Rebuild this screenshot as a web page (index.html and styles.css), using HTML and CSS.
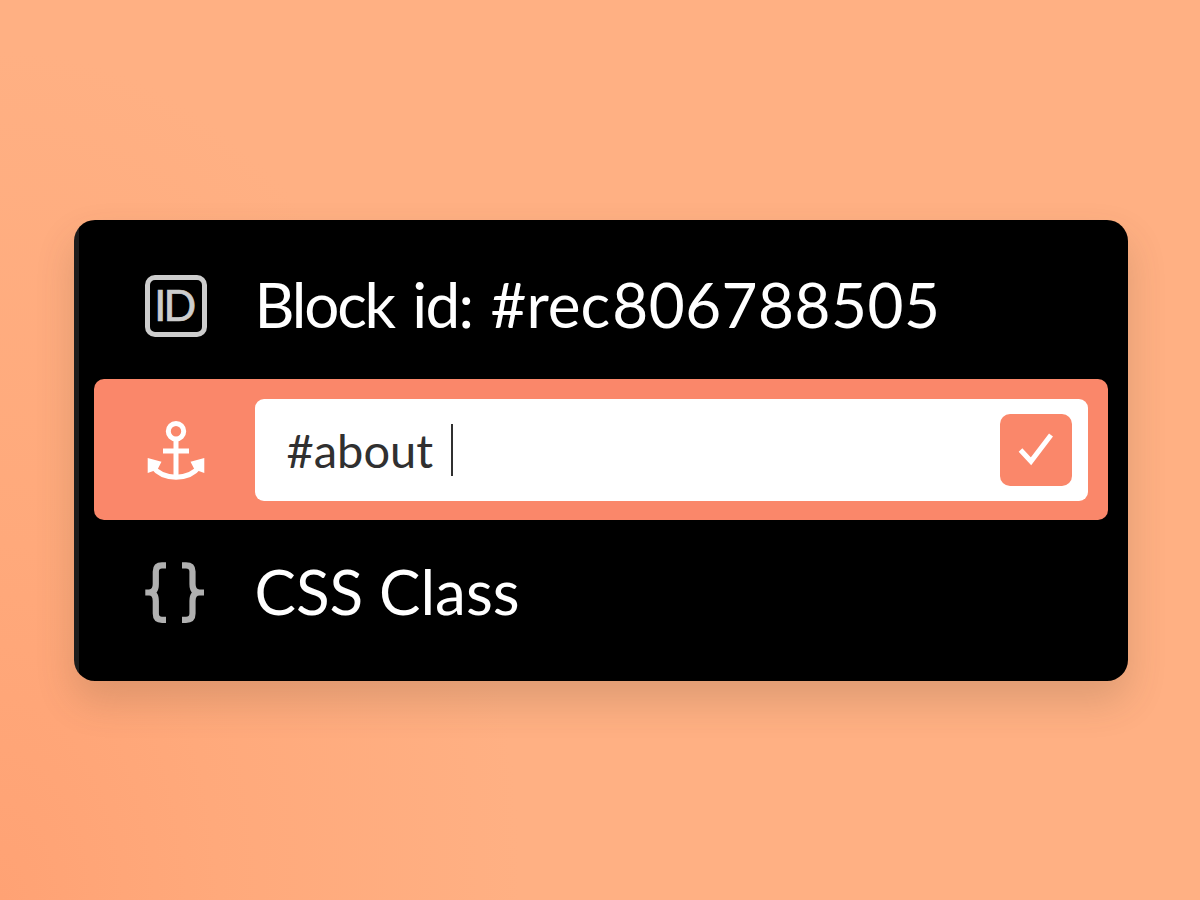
FILE: index.html
```
<!DOCTYPE html>
<html lang="en">
<head>
<meta charset="utf-8">
<title>Block settings</title>
<link rel="stylesheet" href="styles.css">
</head>
<body>
<main class="card">
  <div class="row row-id">
    <svg class="icon" viewBox="0 0 62 62">
      <rect x="2.5" y="2.5" width="57" height="57" rx="7.5" fill="none" stroke="#cdcdcd" stroke-width="5"/>
      <text class="icon-text" x="9.300" y="46" textLength="42" lengthAdjust="spacing">ID</text>
    </svg>
    <div class="label"><span class="w-block">Block</span> <span class="w-id">id:</span> <span class="w-rec">#rec</span><span class="w-num">806788505</span></div>
  </div>
  <div class="row row-anchor">
    <svg class="icon" viewBox="0 0 62 62">
      <g transform="translate(0 1)">
        <g fill="none" stroke="#fff" stroke-width="5">
          <circle cx="31" cy="11.200" r="7.700"/>
          <path d="M31 19V58M18 31H44M8 47C18 60.500 44 60.500 54 47"/>
        </g>
        <path d="M2.700 38 16.500 41.700 12.500 49.500 2.700 53ZM59.300 38 45.500 41.700 49.500 49.500 59.300 53Z" fill="#fff"/>
      </g>
    </svg>
    <div class="field">
      <span class="value">#about</span>
      <span class="caret"></span>
      <button class="confirm" aria-label="Save">
        <svg viewBox="0 0 36 36"><path d="M2.500 18 13 29.300 33 3" fill="none" stroke="#fff" stroke-width="5"/></svg>
      </button>
    </div>
  </div>
  <div class="row row-css">
    <svg class="icon" viewBox="0 0 62 62">
      <path d="M21 3.300H17Q10.800 3.300 10.800 9.500V22Q10.800 30.500 4 30.500H0.300 4Q10.800 30.500 10.800 39V51.500Q10.800 57.800 17 57.800H21M37 3.300H41Q47.500 3.300 47.500 9.500V22Q47.500 30.500 54.500 30.500H59 54.500Q47.500 30.500 47.500 39V51.500Q47.500 57.800 41 57.800H37" fill="none" stroke="#b0b0b0" stroke-width="6.200"/>
    </svg>
    <div class="label"><span class="w-css">CSS</span> <span class="w-class">Class</span></div>
  </div>
</main>
</body>
</html>
```
FILE: styles.css
```
* { box-sizing: border-box; }
body {
  margin: 0;
  width: 1200px;
  height: 900px;
  overflow: hidden;
  padding: 220px 72.500px 0 73.500px;
  background: radial-gradient(ellipse 520px 850px at 0 100%, #ffa274 0%, #ffa97b 42%, #ffb083 100%);
  font-family: Lato, "Liberation Sans", sans-serif;
}
.card {
  height: 461px;
  padding: 14px 20px 0;
  border-radius: 21px;
  background: linear-gradient(90deg, #1c1c1c 4.500px, #000 5px);
  box-shadow: 0 20px 38px rgba(80, 70, 50, .19);
}
.row {
  display: flex;
  align-items: center;
  height: 141px;
  padding: 0 20px 0 51.500px;
  border-radius: 10px;
}
.row-id { height: 145px; padding-bottom: 1px; }
.row-css { height: 145px; }
.row-anchor { padding-top: 1px; background: #fa876a; }
.icon { width: 62px; height: 62px; flex: none; margin-right: 47.500px; }
.icon-text { font-size: 43px; fill: #cdcdcd; stroke: #cdcdcd; stroke-width: .7px; }
.label {
  padding-bottom: 4px;
  color: #fff;
  font-size: 62px;
  line-height: 80px;
  white-space: nowrap;
}
.w-block { margin-right: 2.500px; letter-spacing: -2.200px; }
.w-id { margin-right: 2.500px; letter-spacing: -1.700px; }
.w-rec { margin-right: 2px; }
.w-num { letter-spacing: .5px; }
.field {
  display: flex;
  align-items: center;
  flex: 1;
  height: 102px;
  padding: 0 16px 0 32px;
  border-radius: 9px;
  background: #fff;
}
.value { padding-bottom: 1px; color: #303030; font-size: 47px; }
.caret { width: 2px; height: 52px; margin-left: 18px; background: #303030; }
.confirm {
  display: grid;
  place-items: center;
  width: 72px;
  height: 72px;
  margin-left: auto;
  padding: 0;
  border: 0;
  border-radius: 10px;
  background: #fa876a;
}
.confirm svg { width: 36px; height: 36px; }
```
